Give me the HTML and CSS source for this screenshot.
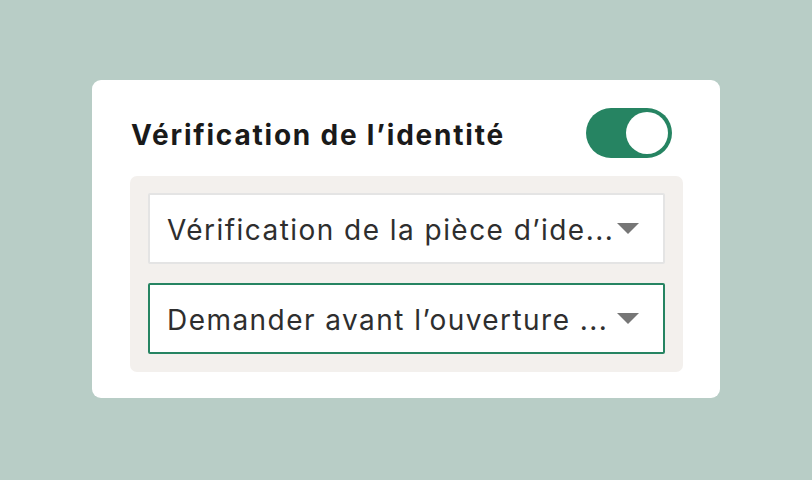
FILE: index.html
```html
<!DOCTYPE html>
<html lang="fr">
<head>
<meta charset="utf-8">
<link rel="stylesheet" href="styles.css">
</head>
<body>
<div class="stage">
  <div class="card">
    <div class="header">
      <h1 class="title">Vérification de l’identité</h1>
      <div class="toggle"><div class="knob"></div></div>
    </div>
    <div class="panel">
      <div class="select">
        <span class="label">Vérification de la pièce d’ide...</span>
        <span class="arrow"></span>
      </div>
      <div class="select select-active">
        <span class="label">Demander avant l’ouverture ...</span>
        <span class="arrow"></span>
      </div>
    </div>
  </div>
</div>
</body>
</html>
```
FILE: styles.css
```css
html, body {
  margin: 0;
  padding: 0;
}
body {
  background: #b8cdc6;
  font-family: Inter, "Noto Sans", sans-serif;
}
.stage {
  width: 812px;
  height: 480px;
  padding-top: 80px;
  padding-left: 92px;
  box-sizing: border-box;
}
.card {
  width: 628px;
  height: 318px;
  box-sizing: border-box;
  background: #fff;
  border-radius: 9px;
  padding: 28px 37px 0 38px;
}
.header {
  display: flex;
  align-items: center;
  justify-content: space-between;
  height: 50px;
  padding-right: 11px;
}
.title {
  margin: 0;
  font-size: 28px;
  font-weight: 700;
  color: #1a1a1a;
  letter-spacing: 1.8px;
  padding-left: 1px;
  padding-top: 4px;
}
.toggle {
  width: 86px;
  height: 50px;
  border-radius: 25px;
  background: #268462;
  position: relative;
}
.knob {
  position: absolute;
  right: 4px;
  top: 4px;
  width: 42px;
  height: 42px;
  border-radius: 50%;
  background: #fff;
}
.panel {
  margin-top: 18px;
  background: #f3f0ed;
  border-radius: 7px;
  padding: 17px 18px 18px 18px;
  display: flex;
  flex-direction: column;
  gap: 19px;
}
.select {
  height: 71px;
  box-sizing: border-box;
  background: #fff;
  border: 2px solid #e4e4e4;
  border-radius: 2px;
  display: flex;
  align-items: center;
  padding: 0 24px 0 17px;
}
.select-active {
  border-color: #268462;
}
.label {
  flex: 1;
  font-size: 28px;
  color: #2e2e2e;
  white-space: nowrap;
  letter-spacing: 1.45px;
  padding-top: 2px;
}
.arrow {
  flex: none;
  width: 0;
  height: 0;
  border-left: 11px solid transparent;
  border-right: 11px solid transparent;
  border-top: 11px solid #767676;
  margin-left: 2px;
}
```
